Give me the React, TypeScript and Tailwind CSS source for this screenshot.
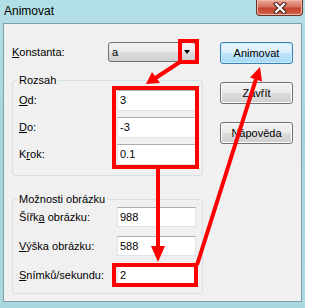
import type { ReactNode } from 'react'

const btn =
  'h-[22px] w-[73px] rounded-[3px] border text-[11px] leading-none text-black'
const btnPlain =
  'border-[#707070] bg-[linear-gradient(#f2f2f2_0%,#ebebeb_50%,#dddddd_50%,#cfcfcf_100%)] shadow-[inset_0_0_0_1px_#fcfcfc]'
const btnDefault =
  'border-[#3c7fb1] bg-[linear-gradient(#eaf6fd_0%,#d9f0fc_50%,#bee6fd_50%,#a7d9f5_100%)] shadow-[inset_0_0_0_1px_#c8ecfb]'

function Field({ label, value, h = 'h-[21px]' }: { label: ReactNode; value: string; h?: string }) {
  return (
    <div className="flex items-center pl-[6px] pr-[6px]">
      <span className="text-[11px]">{label}</span>
      <div
        className={`${h} ml-auto flex w-[79px] items-center border border-[#e2e3ea] border-t-[#abadb3] bg-white pl-[2px] text-[11px]`}
      >
        {value}
      </div>
    </div>
  )
}

function Group({ title, children, className }: { title: string; children: ReactNode; className: string }) {
  return (
    <fieldset className={`w-[191px] rounded-[3px] border border-[#d5dfe5] ${className}`}>
      <legend className="ml-[4px] px-[2px] text-[11px] leading-[13px]">{title}</legend>
      {children}
    </fieldset>
  )
}

function Annotations() {
  // red markup drawn over the dialog
  return (
    <svg className="pointer-events-none absolute left-0 top-0" width={305} height={308} viewBox="0 0 305 308">
      <g fill="none" stroke="#ff0000" strokeWidth={4}>
        <rect x={180} y={41} width={17} height={21} />
        <rect x={114} y={88} width={83} height={79} />
        <rect x={114} y={265} width={82} height={20} />
        <line x1={180} y1={62} x2={154} y2={79} />
        <line x1={158} y1={169} x2={158} y2={248} />
        <line x1={197} y1={265} x2={256} y2={79} />
      </g>
      <g fill="#ff0000">
        <polygon points="146,84 152,72 160,83" />
        <polygon points="158,262 151,246 165,246" />
        <polygon points="260,67 250,77.5 262,81.5" />
      </g>
    </svg>
  )
}

export default function App() {
  return (
    <div className="relative h-[308px] w-[305px] overflow-hidden bg-[linear-gradient(180deg,#b3e0e6_0%,#a6d6dd_40%,#a9d8df_100%)] font-['Liberation_Sans',Arial,sans-serif] text-black">
      <div className="flex h-[23px] items-start">
        <span className="pl-[4px] pt-[4px] text-[12px] leading-[14px]">Animovat</span>
        <div className="ml-auto mr-[2px] flex h-[16px] w-[47px] items-center justify-center rounded-b-[4px] border border-t-0 border-[#6b3327] bg-[linear-gradient(#e9a897_0%,#d8715c_45%,#c4452f_55%,#d2664c_100%)] shadow-[inset_0_0_0_1px_#f0b8a8]">
          <svg width={14} height={12} viewBox="0 0 14 12">
            <path d="M3 2 L11 10 M11 2 L3 10" stroke="#3d1a14" strokeWidth={4.2} strokeLinecap="square" />
            <path d="M3 2 L11 10 M11 2 L3 10" stroke="#ffffff" strokeWidth={2.2} strokeLinecap="square" />
          </svg>
        </div>
      </div>

      <div className="mx-[3px] flex h-[279px] border border-[#7f9ea6] bg-[#f0f0f0] pl-[8px]">
        <div className="flex w-[191px] flex-col">
          <div className="mt-[18px] flex h-[20px] items-center">
            <span className="text-[11px]">
              <u>K</u>onstanta:
            </span>
            <div className="ml-auto mr-[7px] flex h-[20px] w-[88px] items-center rounded-[3px] border border-[#707070] bg-[linear-gradient(#f2f2f2_0%,#ebebeb_50%,#dddddd_50%,#cfcfcf_100%)] pl-[3px] pr-[5px] text-[11px]">
              a
              <span className="ml-auto h-0 w-0 border-x-[3.5px] border-t-[4px] border-x-transparent border-t-black" />
            </div>
          </div>

          <Group title="Rozsah" className="mt-[12px] pb-[10px]">
            <div className="mt-[3px] flex flex-col gap-[6px]">
              <Field label={<><u>O</u>d:</>} value="3" />
              <Field label={<><u>D</u>o:</>} value="-3" />
              <Field label={<>K<u>r</u>ok:</>} value="0.1" />
            </div>
          </Group>

          <Group title="Možnosti obrázku" className="mt-[17px] pb-[8px]">
            <div className="mt-[1px] flex flex-col gap-[9px]">
              <Field label={<>Šířk<u>a</u> obrázku:</>} value="988" h="h-[20px]" />
              <Field label={<><u>V</u>ýška obrázku:</>} value="588" h="h-[20px]" />
              <Field label={<><u>S</u>nímků/sekundu:</>} value="2" h="h-[20px]" />
            </div>
          </Group>
        </div>

        <div className="ml-[17px] mt-[18px] flex flex-col gap-[18px]">
          <button className={`${btn} ${btnDefault}`}>Animovat</button>
          <button className={`${btn} ${btnPlain}`}>Zavřít</button>
          <button className={`${btn} ${btnPlain}`}>Nápověda</button>
        </div>
      </div>

      <Annotations />
    </div>
  )
}
